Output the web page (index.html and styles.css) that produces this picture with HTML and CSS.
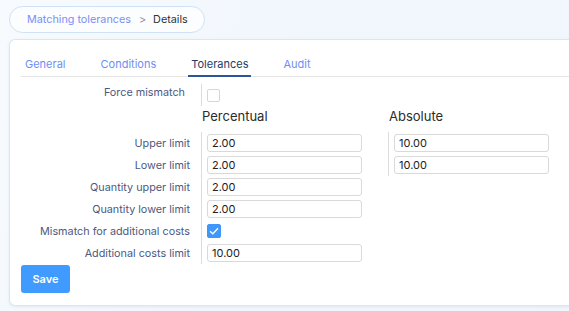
FILE: index.html
```html
<!DOCTYPE html>
<html lang="en">
<head>
    <meta charset="UTF-8" />
    <meta name="viewport" content="width=device-width, initial-scale=1" />
    <title>Matching tolerances - Details</title>
    <link rel="stylesheet" href="styles.css">
</head>
<body>
    <nav class="breadcrumb">
        <a href="#">Matching tolerances</a>
        <span class="crumb-sep">&gt;</span>
        <span class="crumb-current">Details</span>
    </nav>

    <div class="card">
        <div class="tabs">
            <a href="#" class="tab">General</a>
            <a href="#" class="tab">Conditions</a>
            <a href="#" class="tab active">Tolerances</a>
            <a href="#" class="tab">Audit</a>
        </div>

        <form class="tol-form">
            <div class="grid">
                <label class="lbl lbl-top">Force mismatch</label>
                <div class="cell first"><input type="checkbox" class="chk"></div>
                <div></div>

                <div></div>
                <div class="col-head">Percentual</div>
                <div class="col-head abs">Absolute</div>

                <label class="lbl">Upper limit</label>
                <div class="cell top"><input type="text" class="field" value="2.00"></div>
                <div class="cell abs top"><input type="text" class="field" value="10.00"></div>

                <label class="lbl">Lower limit</label>
                <div class="cell"><input type="text" class="field" value="2.00"></div>
                <div class="cell abs"><input type="text" class="field" value="10.00"></div>

                <label class="lbl">Quantity upper limit</label>
                <div class="cell"><input type="text" class="field" value="2.00"></div>
                <div></div>

                <label class="lbl">Quantity lower limit</label>
                <div class="cell"><input type="text" class="field" value="2.00"></div>
                <div></div>

                <label class="lbl">Mismatch for additional costs</label>
                <div class="cell"><span class="chk checked"><svg width="10" height="8" viewBox="0 0 10 8"><path d="M1 4.2 L3.8 6.8 L9 1.2" fill="none" stroke="#fff" stroke-width="1.3"/></svg></span></div>
                <div></div>

                <label class="lbl">Additional costs limit</label>
                <div class="cell"><input type="text" class="field" value="10.00"></div>
                <div></div>
            </div>

            <button type="button" class="btn-save">Save</button>
        </form>
    </div>
</body>
</html>
```

FILE: styles.css
```css
body {
    margin: 0;
    padding: 6px 0 0 9px;
    font-family: Inter, 'Noto Sans', sans-serif;
    background: linear-gradient(110deg, #f7fbfe 0%, #f2f7fd 40%, #f1f6fd 100%);
    min-height: 305px;
    overflow: hidden;
    color: #333;
}
.breadcrumb {
    display: inline-flex;
    align-items: center;
    height: 25px;
    padding: 0 16px 0 17px;
    border: 1px solid #cfe2f5;
    border-radius: 14px;
    background: #fbfdff;
    font-size: 10.8px;
}
.breadcrumb a {
    color: #7d8ff2;
    text-decoration: none;
}
.crumb-sep {
    color: #8b8b8b;
    margin: 0 7px 0 8px;
}
.crumb-current {
    color: #333;
}
.card {
    margin-top: 6px;
    width: calc(100vw - 20px);
    background: #fff;
    border: 1px solid #d7e7f5;
    border-right: none;
    border-radius: 6px 0 0 6px;
    box-shadow: 0 1px 3px rgba(120,150,190,0.15);
    padding: 17px 0 12px 11px;
}
.tabs {
    display: flex;
    gap: 29px;
    border-bottom: 1px solid #e6e6e6;
    padding-left: 1px;
}
.tab {
    font-size: 11px;
    color: #6f8ef2;
    text-decoration: none;
    padding: 0 3px 4px 3px;
    margin-bottom: -1px;
    border-bottom: 2px solid transparent;
}
.tab.active {
    color: #1f3a66;
    border-bottom-color: #2e5599;
}
.tol-form {
    padding-top: 7px;
}
.grid {
    display: grid;
    grid-template-columns: 180px 187px 1fr;
}
.lbl {
    font-size: 10.8px;
    color: #4c5883;
    text-align: right;
    padding-right: 11px;
    display: flex;
    align-items: center;
    justify-content: flex-end;
    height: 22px;
}
.lbl-top {
    padding-right: 16px;
    align-items: flex-start;
    padding-top: 2px;
    box-sizing: border-box;
}
.cell {
    border-left: 1px solid #dcdcdc;
    padding: 2px 0 2px 5px;
    height: 18px;
    display: flex;
    align-items: center;
}
.col-head {
    font-size: 13px;
    color: #2b2b2b;
    height: 26px;
    padding-left: 1px;
    padding-top: 2px;
    box-sizing: border-box;
}
.field {
    width: 155px;
    height: 18px;
    box-sizing: border-box;
    border: 1px solid #d9d9d9;
    border-radius: 3px;
    padding: 0 4px;
    font-family: Inter, 'Noto Sans', sans-serif;
    font-size: 11px;
    color: #222;
    outline: none;
}
.chk {
    appearance: none;
    -webkit-appearance: none;
    width: 13px;
    height: 13px;
    margin: 0;
    border: 1px solid #d6d6d6;
    border-radius: 2px;
    background: #fff;
    box-sizing: border-box;
}
.chk.checked {
    width: 14px;
    height: 14px;
    display: flex;
    align-items: center;
    justify-content: center;
    background: #3f96fb;
    border-color: #3f96fb;
}
.btn-save {
    margin-top: 1px;
    width: 49px;
    height: 28px;
    background: #3f9bff;
    color: #fff;
    border: none;
    border-radius: 3px;
    font-family: Inter, 'Noto Sans', sans-serif;
    font-size: 11px;
    font-weight: 600;
    cursor: pointer;
}
```
